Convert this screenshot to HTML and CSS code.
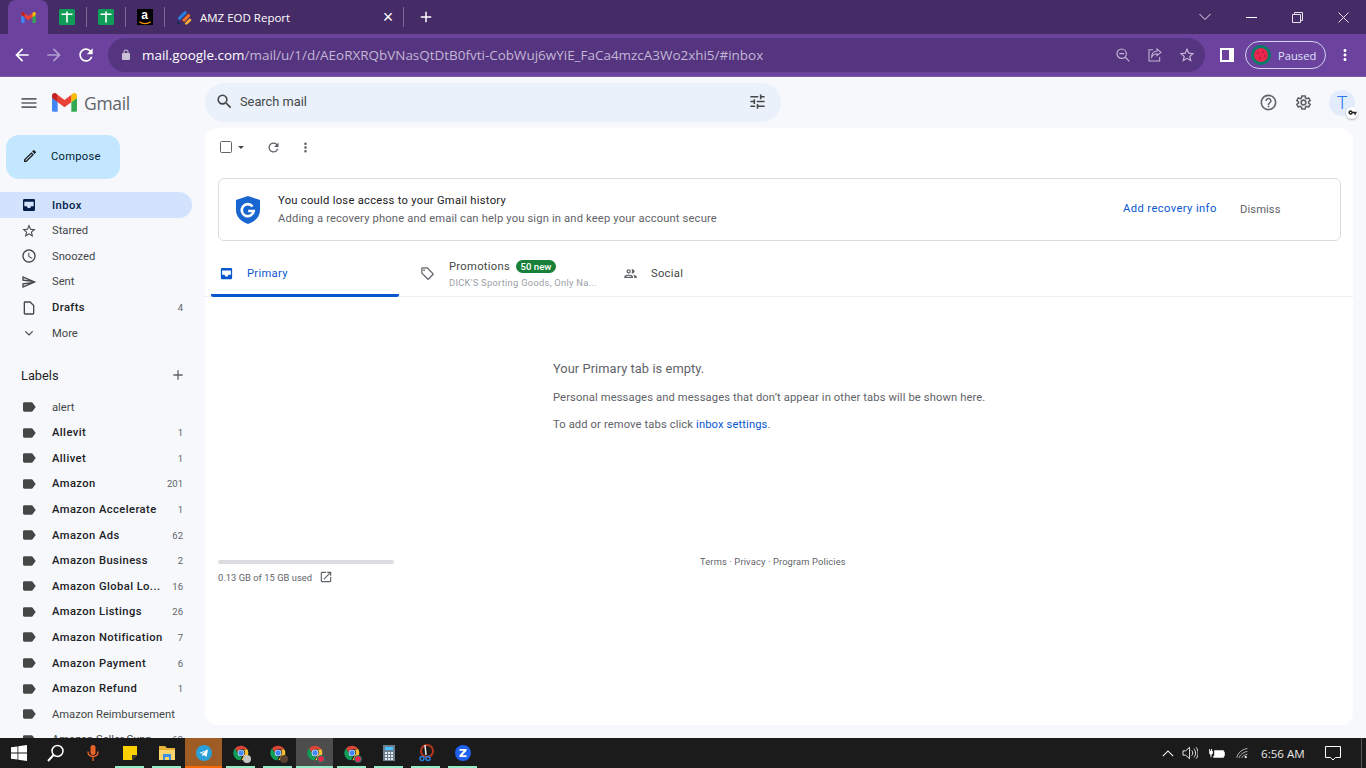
FILE: index.html
```html
<!DOCTYPE html>
<html lang="en">
<head>
<meta charset="utf-8">
<title>Gmail</title>
<link rel="stylesheet" href="styles.css">
</head>
<body>
<svg class="defs" aria-hidden="true">
  <symbol id="gmail" viewBox="0 0 256 193">
    <path fill="#4285F4" d="M58.182 192.05V93.14L27.507 65.077 0 49.504v125.091c0 9.658 7.825 17.455 17.455 17.455h40.727Z"/>
    <path fill="#34A853" d="M197.818 192.05h40.727c9.659 0 17.455-7.826 17.455-17.455V49.505l-31.156 17.837-27.026 25.798v98.91Z"/>
    <path fill="#EA4335" d="m58.182 93.14-4.174-38.647 4.174-36.989L128 69.868l69.818-52.364 4.669 34.992-4.669 40.644L128 145.504z"/>
    <path fill="#FBBC04" d="M197.818 17.504V93.14L256 49.504V26.231c0-21.585-24.64-33.89-41.89-20.945l-16.292 12.218Z"/>
    <path fill="#C5221F" d="m0 49.504 26.759 20.07L58.182 93.14V17.504L41.89 5.286C24.61-7.66 0 4.646 0 26.23v23.273Z"/>
  </symbol>
  <symbol id="sheet" viewBox="0 0 16 16">
    <rect width="16" height="16" rx="1.5" fill="#0f9d58"/>
    <path fill="#fff" d="M7.200 2.500h1.600v2h4.700v1.600H8.800v7.400H7.200V6.100H2.500V4.500h4.700z"/>
  </symbol>
  <symbol id="chrome" viewBox="0 0 24 24">
    <path fill="#db4437" d="M12 1a11 11 0 0 1 9.5 5.5H12a5.5 5.5 0 0 0-5.3 4L3 5A11 11 0 0 1 12 1z"/>
    <path fill="#fbc02d" d="M21.5 6.5A11 11 0 0 1 12.5 23l4.3-8A5.5 5.5 0 0 0 16 7z"/>
    <path fill="#0f9d58" d="M3 5l4 6.8A5.5 5.5 0 0 0 13.500 17.300L11 23A11 11 0 0 1 3 5z"/>
    <circle cx="12" cy="12" r="5" fill="#fff"/>
    <circle cx="12" cy="12" r="4" fill="#4285f4"/>
  </symbol>
  <symbol id="menu" viewBox="0 0 24 24"><path d="M3 18h18v-2H3v2zm0-5h18v-2H3v2zm0-7v2h18V6H3z"/></symbol>
  <symbol id="search" viewBox="0 0 24 24"><path d="M15.500 14h-.79l-.28-.27A6.470 6.470 0 0 0 16 9.500 6.500 6.500 0 1 0 9.500 16c1.610 0 3.090-.59 4.230-1.570l.27.28v.79l5 4.990L20.490 19l-4.990-5zm-6 0C7.010 14 5 11.990 5 9.500S7.010 5 9.500 5 14 7.010 14 9.500 11.990 14 9.500 14z"/></symbol>
  <symbol id="tune" viewBox="0 0 24 24"><path d="M3 17v2h6v-2H3zM3 5v2h10V5H3zm10 16v-2h8v-2h-8v-2h-2v6h2zM7 9v2H3v2h4v2h2V9H7zm14 4v-2H11v2h10zm-6-4h2V7h4V5h-4V3h-2v6z"/></symbol>
  <symbol id="help" viewBox="0 0 24 24"><path d="M11 18h2v-2h-2v2zm1-16C6.480 2 2 6.480 2 12s4.480 10 10 10 10-4.480 10-10S17.520 2 12 2zm0 18c-4.410 0-8-3.590-8-8s3.590-8 8-8 8 3.590 8 8-3.590 8-8 8zm0-14c-2.210 0-4 1.790-4 4h2c0-1.100.9-2 2-2s2 .9 2 2c0 2-3 1.750-3 5h2c0-2.250 3-2.500 3-5 0-2.210-1.790-4-4-4z"/></symbol>
  <symbol id="gear" viewBox="0 0 24 24"><path fill="none" stroke="currentColor" stroke-width="2" d="M18.400 12.900c.05-.3.100-.6.100-.9s-.05-.6-.1-.9l2-1.600-1.900-3.300-2.400 1c-.5-.4-1-.7-1.600-.9L14.100 3.700h-4.200l-.4 2.600c-.6.200-1.100.5-1.600.9l-2.400-1-1.900 3.300 2 1.600c-.05.3-.1.600-.1.900s.05.6.1.9l-2 1.600 1.900 3.300 2.400-1c.5.400 1 .7 1.600.9l.4 2.600h4.200l.4-2.600c.6-.2 1.100-.5 1.600-.9l2.400 1 1.900-3.300z"/><circle cx="12" cy="12" r="3" fill="none" stroke="currentColor" stroke-width="2"/></symbol>
  <symbol id="inbox" viewBox="0 0 24 24"><path fill-rule="evenodd" d="M19 3H5a2 2 0 0 0-2 2v14a2 2 0 0 0 2 2h14a2 2 0 0 0 2-2V5a2 2 0 0 0-2-2zM5 7h14v7h-4c0 1.660-1.350 3-3 3s-3-1.340-3-3H5z"/></symbol>
  <symbol id="star" viewBox="0 0 24 24"><path d="M22 9.240l-7.190-.62L12 2 9.190 8.630 2 9.240l5.460 4.730L5.820 21 12 17.270 18.180 21l-1.630-7.030L22 9.240zM12 15.400l-3.760 2.270 1-4.280-3.320-2.880 4.380-.38L12 6.100l1.710 4.040 4.380.38-3.320 2.880 1 4.280L12 15.400z"/></symbol>
  <symbol id="clock" viewBox="0 0 24 24"><path d="M11.990 2C6.470 2 2 6.480 2 12s4.470 10 9.990 10C17.520 22 22 17.520 22 12S17.520 2 11.990 2zM12 20c-4.420 0-8-3.580-8-8s3.580-8 8-8 8 3.580 8 8-3.580 8-8 8zm.5-13H11v6l5.250 3.150.75-1.230-4.500-2.670z"/></symbol>
  <symbol id="send" viewBox="0 0 24 24"><path d="M4.010 6.030l7.510 3.220-7.520-1 .01-2.220m7.500 8.720L4 17.970v-2.220l7.510-1M2.010 3L2 10l15 2-15 2 .01 7L23 12 2.010 3z"/></symbol>
  <symbol id="draft" viewBox="0 0 24 24"><path d="M14 2H6c-1.100 0-1.990.9-1.990 2L4 20c0 1.100.89 2 1.990 2H18c1.100 0 2-.9 2-2V8l-6-6zM6 20V4h7.200L18 8.800V20H6z"/></symbol>
  <symbol id="chev" viewBox="0 0 24 24"><path fill="none" stroke="currentColor" stroke-width="1.800" d="M6.500 9.500l5.500 5.500 5.500-5.500"/></symbol>
  <symbol id="label" viewBox="0 0 24 24"><path d="M17.630 5.840C17.270 5.330 16.670 5 16 5L5 5.010C3.900 5.010 3 5.900 3 7v10c0 1.100.9 1.990 2 1.990L16 19c.67 0 1.270-.33 1.630-.84L22 12l-4.370-6.160z"/></symbol>
  <symbol id="add" viewBox="0 0 24 24"><path d="M19 13h-6v6h-2v-6H5v-2h6V5h2v6h6v2z"/></symbol>
  <symbol id="pen" viewBox="0 0 24 24"><path d="M3 17.250V21h3.750L17.810 9.940l-3.750-3.750L3 17.250zM5.920 19H5v-.92l9.060-9.060.92.92L5.920 19zM20.710 7.040a1 1 0 0 0 0-1.410l-2.340-2.340a1 1 0 0 0-1.410 0l-1.830 1.830 3.750 3.750 1.830-1.830z"/></symbol>
  <symbol id="refresh" viewBox="0 0 24 24"><path d="M17.650 6.350A7.958 7.958 0 0 0 12 4c-4.420 0-7.990 3.580-7.990 8s3.570 8 7.990 8c3.730 0 6.840-2.550 7.730-6h-2.080A5.990 5.990 0 0 1 12 18c-3.310 0-6-2.690-6-6s2.690-6 6-6c1.660 0 3.140.69 4.220 1.780L13 11h7V4l-2.350 2.350z"/></symbol>
  <symbol id="dots" viewBox="0 0 24 24"><path d="M12 8c1.100 0 2-.9 2-2s-.9-2-2-2-2 .9-2 2 .9 2 2 2zm0 2c-1.100 0-2 .9-2 2s.9 2 2 2 2-.9 2-2-.9-2-2-2zm0 6c-1.100 0-2 .9-2 2s.9 2 2 2 2-.9 2-2-.9-2-2-2z"/></symbol>
  <symbol id="tag" viewBox="0 0 24 24"><path d="M21.410 11.580l-9-9C12.050 2.220 11.550 2 11 2H4c-1.100 0-2 .9-2 2v7c0 .55.22 1.050.59 1.420l9 9c.36.36.86.58 1.410.58s1.050-.22 1.410-.59l7-7c.37-.36.59-.86.59-1.410s-.23-1.060-.59-1.420zM13 20.010L4 11V4h7v-.01l9 9-7 7.020z"/><circle cx="6.500" cy="6.500" r="1.500"/></symbol>
  <symbol id="people" viewBox="0 0 24 24"><path d="M9 13.750c-2.340 0-7 1.170-7 3.500V19h14v-1.750c0-2.330-4.660-3.500-7-3.500zM4.340 17c.84-.58 2.870-1.250 4.660-1.250s3.820.67 4.660 1.250H4.340zM9 12c1.930 0 3.500-1.570 3.500-3.500S10.930 5 9 5 5.500 6.570 5.500 8.500 7.070 12 9 12zm0-5c.83 0 1.500.67 1.500 1.500S9.830 10 9 10s-1.500-.67-1.500-1.500S8.170 7 9 7zm7.040 6.810c1.160.84 1.960 1.960 1.960 3.440V19h4v-1.750c0-2.020-3.500-3.170-5.960-3.440zM15 12c1.930 0 3.500-1.570 3.500-3.500S16.930 5 15 5c-.54 0-1.040.13-1.500.35.63.89 1 1.980 1 3.150s-.37 2.260-1 3.150c.46.22.96.35 1.500.35z"/></symbol>
  <symbol id="open" viewBox="0 0 24 24"><path d="M19 19H5V5h7V3H5a2 2 0 0 0-2 2v14a2 2 0 0 0 2 2h14c1.100 0 2-.9 2-2v-7h-2v7zM14 3v2h3.590l-9.830 9.830 1.410 1.410L19 6.410V10h2V3h-7z"/></symbol>
  <symbol id="back" viewBox="0 0 24 24"><path d="M20 11H7.830l5.590-5.590L12 4l-8 8 8 8 1.410-1.410L7.830 13H20v-2z"/></symbol>
  <symbol id="forward" viewBox="0 0 24 24"><path d="M4 11h12.170l-5.590-5.590L12 4l8 8-8 8-1.410-1.410L16.170 13H4v-2z"/></symbol>
  <symbol id="lock" viewBox="0 0 24 24"><path d="M18 8h-1V6a5 5 0 0 0-10 0v2H6a2 2 0 0 0-2 2v10a2 2 0 0 0 2 2h12a2 2 0 0 0 2-2V10a2 2 0 0 0-2-2zM9 8V6a3 3 0 0 1 6 0v2H9z"/></symbol>
  <symbol id="zoomout" viewBox="0 0 24 24"><circle cx="10" cy="10" r="7" fill="none" stroke="currentColor" stroke-width="1.800"/><path fill="none" stroke="currentColor" stroke-width="1.800" d="M15 15l6.500 6.500M6.500 10h7"/></symbol>
  <symbol id="share" viewBox="0 0 24 24"><path fill="none" stroke="currentColor" stroke-width="1.600" d="M9 4H3v17h16v-6M21 8l-6-5v3c-5 .5-8 4-8 9 2-3.500 4.500-5 8-5v3z"/></symbol>
  <symbol id="staro" viewBox="0 0 24 24"><path fill="none" stroke="currentColor" stroke-width="1.800" d="M12 3.500l2.600 5.800 6.400.6-4.800 4.200 1.400 6.200-5.600-3.300-5.600 3.300 1.400-6.200L3 9.900l6.400-.6z"/></symbol>
  <symbol id="key" viewBox="0 0 24 24"><path d="M12.650 10A6 6 0 0 0 1 12a6 6 0 0 0 11.650 2H17v4h4v-4h2v-4H12.650zM7 14a2 2 0 1 1 0-4 2 2 0 0 1 0 4z"/></symbol>
</svg>

<div class="app">
  <header class="tabstrip">
    <div class="tab-active"><svg class="fav-gmail"><use href="#gmail"/></svg></div>
    <div class="tab-pin"><svg class="fav"><use href="#sheet"/></svg></div>
    <div class="tab-pin"><svg class="fav"><use href="#sheet"/></svg></div>
    <div class="tab-pin"><div class="fav-amazon"><span class="amazon-a">a</span><svg class="amazon-smile" viewBox="0 0 16 5"><path fill="none" stroke="#f90" stroke-width="1.500" d="M1 1c4 3 10 3 14 0"/></svg></div></div>
    <div class="tab-page">
      <svg class="fav" viewBox="0 0 16 16"><path fill="#2a7de1" d="M1.500 9L8 2.500a1.600 1.600 0 0 1 2.300 2.300L3.800 11.300z"/><path fill="#f37021" d="M6 11l5.500-5.500a1.500 1.500 0 0 1 2.200 2.200L8.200 13.200z"/><path fill="#fbb034" d="M9 14l4-4a1.300 1.300 0 0 1 1.900 1.900l-3.800 3.600H9z"/><path fill="#1a2a5e" d="M1 15v-4l4 4z"/></svg>
      <span class="tab-title">AMZ EOD Report</span>
      <span class="tab-close">×</span>
    </div>
    <svg class="newtab"><use href="#add"/></svg>
    <div class="spacer"></div>
    <div class="winbtn"><svg class="win-chev" viewBox="0 0 12 8"><path fill="none" stroke="currentColor" d="M.5 1l5.500 5.500L11.500 1"/></svg></div>
    <div class="winbtn"><div class="win-min"></div></div>
    <div class="winbtn"><svg class="win-ico" viewBox="0 0 11 11"><path fill="none" stroke="currentColor" d="M.5 2.500h8v8h-8zM2.500 2.500v-2h8v8h-2"/></svg></div>
    <div class="winbtn"><svg class="win-ico" viewBox="0 0 11 11"><path fill="none" stroke="currentColor" d="M.5.5l10 10M10.500.5l-10 10"/></svg></div>
  </header>

  <nav class="toolbar">
    <div class="navbtn"><svg class="ico20 c-white"><use href="#back"/></svg></div>
    <div class="navbtn"><svg class="ico20 c-dim"><use href="#forward"/></svg></div>
    <div class="navbtn"><svg class="ico20 c-white"><use href="#refresh"/></svg></div>
    <div class="omnibox">
      <svg class="lock"><use href="#lock"/></svg>
      <span class="url"><span class="url-host">mail.google.com</span>/mail/u/1/d/AEoRXRQbVNasQtDtB0fvti-CobWuj6wYiE_FaCa4mzcA3Wo2xhi5/#inbox</span>
      <div class="omni-btn"><svg class="ico16"><use href="#zoomout"/></svg></div>
      <div class="omni-btn"><svg class="ico16"><use href="#share"/></svg></div>
      <div class="omni-btn"><svg class="ico16"><use href="#staro"/></svg></div>
    </div>
    <div class="sidepanel"></div>
    <div class="profile">
      <svg class="melon" viewBox="0 0 20 20"><circle cx="10" cy="10" r="10" fill="#067d68"/><circle cx="10" cy="10" r="7" fill="#e9264d"/><circle cx="7" cy="8" r=".7" fill="#7a1028"/><circle cx="12" cy="7" r=".7" fill="#7a1028"/><circle cx="14" cy="11" r=".7" fill="#7a1028"/><circle cx="9" cy="13" r=".7" fill="#7a1028"/></svg>
      <span class="paused">Paused</span>
    </div>
    <svg class="chrome-dots"><use href="#dots"/></svg>
  </nav>

  <div class="gmail">
    <div class="brand">
      <svg class="ico20 hamburger"><use href="#menu"/></svg>
      <svg class="gmail-logo"><use href="#gmail"/></svg>
      <span class="gmail-word">Gmail</span>
    </div>
    <div class="topbar">
      <div class="searchbox">
        <svg class="ico19 c-dark"><use href="#search"/></svg>
        <span class="search-text">Search mail</span>
        <svg class="ico19 c-dark tune"><use href="#tune"/></svg>
      </div>
      <div class="spacer"></div>
      <svg class="ico19 c-grey help"><use href="#help"/></svg>
      <svg class="ico19 c-grey gear"><use href="#gear"/></svg>
      <div class="avatar">T<span class="keybadge"><svg class="keyico"><use href="#key"/></svg></span></div>
    </div>

    <aside class="sidebar">
      <div class="compose"><svg class="ico16 c-black"><use href="#pen"/></svg><span>Compose</span></div>
      <ul class="nav main-nav">
        <li class="row active"><svg class="rowico"><use href="#inbox"/></svg><span class="name">Inbox</span></li>
        <li class="row"><svg class="rowico"><use href="#star"/></svg><span class="name">Starred</span></li>
        <li class="row"><svg class="rowico"><use href="#clock"/></svg><span class="name">Snoozed</span></li>
        <li class="row"><svg class="rowico"><use href="#send"/></svg><span class="name">Sent</span></li>
        <li class="row unread"><svg class="rowico"><use href="#draft"/></svg><span class="name">Drafts</span><span class="count">4</span></li>
        <li class="row"><svg class="rowico"><use href="#chev"/></svg><span class="name">More</span></li>
      </ul>
      <div class="labels-head"><span>Labels</span><svg class="ico16 c-grey"><use href="#add"/></svg></div>
      <ul class="nav labels">
        <li class="row"><svg class="rowico"><use href="#label"/></svg><span class="name">alert</span></li>
        <li class="row unread"><svg class="rowico"><use href="#label"/></svg><span class="name">Allevit</span><span class="count">1</span></li>
        <li class="row unread"><svg class="rowico"><use href="#label"/></svg><span class="name">Allivet</span><span class="count">1</span></li>
        <li class="row unread"><svg class="rowico"><use href="#label"/></svg><span class="name">Amazon</span><span class="count">201</span></li>
        <li class="row unread"><svg class="rowico"><use href="#label"/></svg><span class="name">Amazon Accelerate</span><span class="count">1</span></li>
        <li class="row unread"><svg class="rowico"><use href="#label"/></svg><span class="name">Amazon Ads</span><span class="count">62</span></li>
        <li class="row unread"><svg class="rowico"><use href="#label"/></svg><span class="name">Amazon Business</span><span class="count">2</span></li>
        <li class="row unread"><svg class="rowico"><use href="#label"/></svg><span class="name">Amazon Global Lo...</span><span class="count">16</span></li>
        <li class="row unread"><svg class="rowico"><use href="#label"/></svg><span class="name">Amazon Listings</span><span class="count">26</span></li>
        <li class="row unread"><svg class="rowico"><use href="#label"/></svg><span class="name">Amazon Notification</span><span class="count">7</span></li>
        <li class="row unread"><svg class="rowico"><use href="#label"/></svg><span class="name">Amazon Payment</span><span class="count">6</span></li>
        <li class="row unread"><svg class="rowico"><use href="#label"/></svg><span class="name">Amazon Refund</span><span class="count">1</span></li>
        <li class="row"><svg class="rowico"><use href="#label"/></svg><span class="name">Amazon Reimbursement</span></li>
        <li class="row"><svg class="rowico"><use href="#label"/></svg><span class="name">Amazon Seller Supp</span><span class="count">63</span></li>
      </ul>
    </aside>

    <main class="panel">
      <div class="actions">
        <div class="checkbox"></div>
        <div class="caret"></div>
        <svg class="ico15 c-grey refresh"><use href="#refresh"/></svg>
        <svg class="ico15 c-grey more"><use href="#dots"/></svg>
      </div>
      <section class="banner">
        <svg class="shield" viewBox="0 0 24 28"><path fill="#1a66d0" d="M12 0l12 4v10c0 7-5 11.500-12 14C5 25.500 0 21 0 14V4z"/><path fill="none" stroke="#fff" stroke-width="2.600" d="M16.500 10.500a6 6 0 1 0 1.200 4.500h-5.500"/></svg>
        <div class="banner-text">
          <div class="banner-title">You could lose access to your Gmail history</div>
          <div class="banner-sub">Adding a recovery phone and email can help you sign in and keep your account secure</div>
        </div>
        <a class="banner-link">Add recovery info</a>
        <span class="banner-dismiss">Dismiss</span>
      </section>
      <div class="tabs">
        <div class="mailtab primary"><svg class="ico15"><use href="#inbox"/></svg><span>Primary</span></div>
        <div class="mailtab promo">
          <svg class="ico15 c-grey"><use href="#tag"/></svg>
          <div class="promo-text">
            <div class="promo-top"><span>Promotions</span><span class="newbadge">50 new</span></div>
            <div class="promo-sub">DICK'S Sporting Goods, Only Na...</div>
          </div>
        </div>
        <div class="mailtab social"><svg class="ico15 c-grey"><use href="#people"/></svg><span>Social</span></div>
      </div>
      <div class="empty">
        <div class="empty-title">Your Primary tab is empty.</div>
        <div class="empty-line">Personal messages and messages that don’t appear in other tabs will be shown here.</div>
        <div class="empty-line gap">To add or remove tabs click <a class="link">inbox settings</a>.</div>
      </div>
      <footer class="foot">
        <div class="storage">
          <div class="bar"></div>
          <div class="used"><span>0.13 GB of 15 GB used</span><svg class="ico14"><use href="#open"/></svg></div>
        </div>
        <div class="terms">Terms · Privacy · Program Policies</div>
      </footer>
    </main>
  </div>

  <footer class="taskbar">
    <div class="tb"><svg class="ico16" viewBox="0 0 16 16"><path fill="#fff" d="M0 2.300l6.500-.9v6.200H0zM7.300 1.300L16 0v7.600H7.300zM0 8.400h6.500v6.200L0 13.700zM7.300 8.400H16V16l-8.700-1.200z"/></svg></div>
    <div class="tb"><svg class="ico18" viewBox="0 0 18 18"><circle cx="10.500" cy="7" r="5.500" fill="none" stroke="#fff" stroke-width="1.500"/><path stroke="#fff" stroke-width="2" d="M6.500 11L1 17"/></svg></div>
    <div class="tb"><svg class="ico18" viewBox="0 0 18 18"><rect x="6.500" y="1" width="5" height="10" rx="2.500" fill="#e8632a"/><path fill="none" stroke="#e8632a" stroke-width="1.400" d="M4 7.500c0 3 2 5 5 5s5-2 5-5M9 12.500V17"/></svg></div>
    <div class="tb on"><svg class="ico16" viewBox="0 0 16 16"><path fill="#fbd000" d="M1 1h14v9l-5 5H1z"/><path fill="#333" d="M15 10l-5 5v-5z"/></svg></div>
    <div class="tb on"><svg class="ico18" viewBox="0 0 18 18"><path fill="#e8b23a" d="M1 2h6l2 2h8v12H1z"/><path fill="#fbd56b" d="M1 6h16v10H1z"/><path fill="#3a8ee6" d="M5 10h8v6h-2v-3H7v3H5z"/></svg></div>
    <div class="tb on tele"><svg class="ico16" viewBox="0 0 20 20"><circle cx="10" cy="10" r="10" fill="#2b9fd8"/><path fill="#fff" d="M4 10l11-4.500-1.800 9.500-3.400-2.500-1.800 1.700-.2-3 4.800-4.200-6 3.600z"/></svg></div>
    <div class="tb on"><div class="chromewrap"><svg class="ico16"><use href="#chrome"/></svg><span class="cbadge grey"></span></div></div>
    <div class="tb on"><div class="chromewrap"><svg class="ico16"><use href="#chrome"/></svg><span class="cbadge brown"></span></div></div>
    <div class="tb on current"><div class="chromewrap"><svg class="ico16"><use href="#chrome"/></svg><span class="cbadge pink"></span></div></div>
    <div class="tb on"><div class="chromewrap"><svg class="ico16"><use href="#chrome"/></svg><span class="cbadge pink"></span></div></div>
    <div class="tb on"><svg class="ico18" viewBox="0 0 18 18"><rect x="3" y="1" width="12" height="16" fill="#6d7f8f"/><rect x="5" y="3" width="8" height="3" fill="#4cc2ff"/><path fill="#e6edf2" d="M5 8h2v2H5zM8 8h2v2H8zM11 8h2v2h-2zM5 11h2v2H5zM8 11h2v2H8zM11 11h2v2h-2zM5 14h2v2H5zM8 14h2v2H8zM11 14h2v2h-2z"/></svg></div>
    <div class="tb on"><svg class="ico18" viewBox="0 0 18 18"><circle cx="10" cy="7" r="6" fill="none" stroke="#b5361c" stroke-width="2"/><path stroke="#eee" stroke-width="1.500" d="M8 1l1 10"/><circle cx="5" cy="14.500" r="2" fill="none" stroke="#2a7de1" stroke-width="1.500"/><circle cx="11" cy="14.500" r="2" fill="none" stroke="#2a7de1" stroke-width="1.500"/></svg></div>
    <div class="tb on"><svg class="ico16" viewBox="0 0 18 18"><circle cx="9" cy="9" r="9" fill="#1f62f0"/><path fill="#fff" d="M5 4.500h8v2L8.300 11.500H13v2H5v-2l4.700-5H5z"/></svg></div>
    <div class="spacer"></div>
    <div class="tray">
      <svg class="tray-ico chev-up" viewBox="0 0 14 8"><path fill="none" stroke="#fff" stroke-width="1.200" d="M1 7l6-6 6 6"/></svg>
      <svg class="tray-ico speaker" viewBox="0 0 18 16"><path fill="none" stroke="#fff" d="M1 5.500h3L8.500 1.500v13L4 10.500H1zM11 5c1.500 1.500 1.500 4.500 0 6M13.500 3c2.500 3 2.500 7 0 10M16 1.500c3 4 3 9 0 13"/></svg>
      <svg class="tray-ico battery" viewBox="0 0 18 12"><path fill="#fff" d="M1 1h1v2h1V1h1v2h1v3L3.500 7.500V10h-1V7.500L1 6zM6.500 2.500H17V4h1v5h-1v1.500H5.500V8.500h1z"/></svg>
      <svg class="tray-ico wifi" viewBox="0 0 16 14"><path fill="none" stroke="#d8d8d8" d="M1 13C2 7 7 2.500 14 1.500M4 13c.8-4 4-6.500 10-8M7 13c.6-2 3-3.500 7-4.500"/><circle cx="12" cy="12" r="1.400" fill="#fff"/></svg>
      <span class="clock">6:56 AM</span>
      <svg class="tray-ico notif" viewBox="0 0 16 15"><path fill="none" stroke="#fff" d="M.5.500h15v11h-5l-2.500 2.500-2.500-2.500h-5z"/></svg>
      <div class="showdesk"></div>
    </div>
  </footer>
</div>
</body>
</html>
```
FILE: styles.css
```css
* { box-sizing: border-box; }
html, body { margin: 0; padding: 0; height: 100%; overflow: hidden; }
body { font-family: Roboto, "Liberation Sans", sans-serif; font-size: 11.2px; color: #202124; }
ul { list-style: none; margin: 0; padding: 0; }
svg { display: block; flex: none; fill: currentColor; }
.defs { width: 0; height: 0; position: absolute; }
.spacer { flex: 1; }

.app { width: 1366px; height: 768px; display: flex; flex-direction: column; overflow: hidden; }

.ico14 { width: 14px; height: 14px; }
.ico15 { width: 15px; height: 15px; }
.ico16 { width: 16px; height: 16px; }
.ico18 { width: 18px; height: 18px; }
.ico19 { width: 19px; height: 19px; }
.ico20 { width: 20px; height: 20px; }
.c-white { color: #fff; }
.c-dim { color: #b39dcf; }
.c-dark { color: #444746; }
.c-grey { color: #5f6368; }
.c-black { color: #1f1f1f; }

/* Chrome tab strip */
.tabstrip { height: 34px; flex: none; background: #452c66; display: flex; align-items: center; padding-left: 8px; color: #fff; }
.tab-active { width: 40px; height: 34px; background: #6b429d; border-radius: 8px 8px 0 0; display: flex; align-items: center; justify-content: center; }
.fav-gmail { width: 15px; height: 11px; }
.fav { width: 16px; height: 16px; }
.tab-pin { width: 39px; height: 20px; display: flex; align-items: center; justify-content: center; border-right: 1px solid #7d6a99; padding-right: 1px; }
.fav-amazon { width: 16px; height: 16px; background: #000; display: flex; flex-direction: column; align-items: center; }
.amazon-a { font: 700 12px/12px "Liberation Sans", sans-serif; color: #fff; }
.amazon-smile { width: 14px; height: 4px; }
.tab-page { width: 239px; height: 20px; display: flex; align-items: center; padding-left: 11px; border-right: 1px solid #7d6a99; }
.tab-title { font: 11.500px "Open Sans", sans-serif; margin-left: 8px; flex: 1; white-space: nowrap; }
.tab-close { font: 18px/20px "Liberation Sans", sans-serif; width: 30px; text-align: center; }
.newtab { width: 18px; height: 18px; margin-left: 13px; color: #fff; }
.winbtn { width: 46px; height: 30px; display: flex; align-items: center; justify-content: center; color: #e8e3ef; }
.win-chev { width: 12px; height: 8px; }
.win-min { width: 11px; height: 1px; background: #fff; }
.win-ico { width: 11px; height: 11px; }

/* Chrome toolbar */
.toolbar { height: 43px; flex: none; background: #6b429d; border-bottom: 1px solid #7d58ab; display: flex; align-items: center; padding-left: 6px; color: #fff; }
.navbtn { width: 32px; display: flex; justify-content: center; }
.omnibox { width: 1097px; height: 34px; margin-left: 6px; border-radius: 17px; background: #55357f; display: flex; align-items: center; padding: 0 2px 0 12px; }
.lock { width: 12px; height: 12px; color: #c9c0d6; }
.url { flex: 1; margin-left: 10px; font: 13.460px "Open Sans", sans-serif; color: #c3b6d6; white-space: nowrap; overflow: hidden; }
.url-host { color: #fff; }
.omni-btn { width: 32px; display: flex; justify-content: center; color: #c3b6d6; }
.sidepanel { width: 14px; height: 14px; margin-left: 15px; border: 2px solid #fff; border-right-width: 5px; background: #6b429d; }
.profile { width: 81px; height: 28px; margin-left: 11px; border: 1px solid #d3d3f2; border-radius: 14px; display: flex; align-items: center; padding-left: 5px; }
.melon { width: 20px; height: 20px; }
.paused { font: 11.200px "Open Sans", sans-serif; color: #dfe3fb; margin-left: 7px; }
.chrome-dots { width: 18px; height: 18px; margin-left: 10px; }

/* Gmail */
.gmail { flex: 1; min-height: 0; background: #f6f8fc; display: grid; grid-template-columns: 205px 1fr; grid-template-rows: 51px 1fr; }
.brand { display: flex; align-items: center; padding-left: 19px; }
.hamburger { color: #5f6368; }
.gmail-logo { width: 25px; height: 19px; margin-left: 13px; }
.gmail-word { font: 17.500px "Open Sans", Roboto, sans-serif; color: #5f6368; margin-left: 7px; letter-spacing: -.3px; }

.topbar { display: flex; align-items: center; padding-right: 11px; }
.searchbox { width: 576px; height: 39px; margin-top: -1px; border-radius: 20px; background: #eaf1fb; display: flex; align-items: center; padding: 0 14px 2px 10px; }
.search-text { flex: 1; margin-left: 6px; font-size: 12.800px; color: #444746; }
.gear { margin-left: 16px; }
.avatar { position: relative; width: 26px; height: 26px; margin-left: 16px; border-radius: 50%; background: #e3ecfb; color: #2a76f0; font-size: 18px; font-weight: 300; line-height: 26px; text-align: center; }
.keybadge { position: absolute; right: -3px; bottom: -3px; width: 12px; height: 12px; border-radius: 50%; background: #fff; box-shadow: 0 1px 2px rgba(0,0,0,.3); display: flex; align-items: center; justify-content: center; }
.keyico { width: 9px; height: 9px; color: #202124; }

.sidebar { overflow: hidden; min-height: 0; }
.compose { margin: 7px 0 0 6px; width: 114px; height: 44px; padding-bottom: 2px; background: #c2e7ff; border-radius: 13px; display: flex; align-items: center; padding-left: 16px; color: #001d35; gap: 13px; letter-spacing: .25px; }
.main-nav { margin-top: 13.400px; }
.row { height: 25.600px; width: 192px; display: flex; align-items: center; padding: 0 9px 0 21px; border-radius: 0 13px 13px 0; color: #444746; }
.rowico { width: 16px; height: 16px; color: #444746; }
.name { margin-left: 15px; flex: 1; white-space: nowrap; }
.count { font-size: 9.500px; color: #5f6368; }
.unread .name { font-weight: 500; color: #202124; letter-spacing: .42px; }
.active { background: #d3e3fd; }
.active .name { font-weight: 500; color: #041e49; letter-spacing: .45px; }
.active .rowico { color: #041e49; }
.labels-head { margin-top: 16.400px; height: 26px; width: 192px; display: flex; align-items: center; justify-content: space-between; padding: 0 6px 0 21px; font-size: 12.800px; color: #1f1f1f; }
.labels { margin-top: 6px; }

.panel { background: #fff; border-radius: 13px; margin: 0 13px 13px 0; min-height: 0; overflow: hidden; }
.actions { height: 38px; display: flex; align-items: center; padding-left: 15px; }
.checkbox { width: 12px; height: 12px; border: 1.500px solid #5f6368; border-radius: 1.500px; }
.caret { margin-left: 6px; border: 3px solid transparent; border-top: 3px solid #444746; border-bottom: 0; }
.refresh { margin-left: 22px; }
.more { margin-left: 17px; }

.banner { margin: 12px 12px 0 13px; height: 63px; border: 1px solid #dadce0; border-radius: 6px; display: flex; align-items: center; padding-left: 17px; }
.shield { width: 24px; height: 28px; }
.banner-text { margin-left: 18px; flex: none; width: 845px; }
.banner-title { line-height: 18px; color: #202124; letter-spacing: .28px; }
.banner-sub { line-height: 18px; color: #5f6368; letter-spacing: .155px; }
.banner-link { color: #0b57d0; width: 117px; letter-spacing: .4px; padding-bottom: 2px; }
.banner-dismiss { color: #5f6368; padding-bottom: 1px; letter-spacing: .1px; }

.tabs { margin-top: 9px; height: 47px; border-bottom: 1px solid #eceff1; display: flex; padding-left: 6px; }
.mailtab { display: flex; align-items: center; color: #444746; height: 47px; letter-spacing: .3px; }
.primary { width: 188px; padding-left: 8px; gap: 13px; color: #0b57d0; border-bottom: 3px solid #0b57d0; border-radius: 0 0 2px 2px; padding-top: 2px; }
.promo { width: 208px; padding-left: 21px; gap: 14px; }
.promo-text { padding-top: 2px; }
.promo-top { display: flex; align-items: center; gap: 6px; line-height: 14px; }
.newbadge { background: #188038; color: #fff; font-size: 9.600px; font-weight: 500; line-height: 13px; height: 13px; width: 40px; text-align: center; border-radius: 7px; letter-spacing: 0; }
.promo-sub { font-size: 9.300px; line-height: 14px; margin-top: 2px; color: #9aa0a6; white-space: nowrap; }
.social { padding-left: 16px; gap: 13px; }

.empty { margin: 62px 0 0 348px; color: #5f6368; }
.empty-title { font-size: 12.800px; line-height: 20px; letter-spacing: .08px; }
.empty-line { line-height: 20px; margin-top: 9px; letter-spacing: .12px; }
.gap { margin-top: 7px; }
.link { color: #0b57d0; }

.foot { display: flex; margin-top: 125px; padding-left: 13px; font-size: 9.300px; color: #5f6368; }
.storage { width: 176px; }
.bar { height: 4px; border-radius: 2px; background: #dadce0; }
.used { display: flex; align-items: center; gap: 7px; margin-top: 6px; letter-spacing: .05px; }
.terms { margin-left: 306px; line-height: 4px; letter-spacing: .15px; }

/* Windows taskbar */
.taskbar { height: 30px; flex: none; background: #1b1b1b; display: flex; align-items: center; color: #fff; }
.tb { width: 37px; height: 30px; position: relative; display: flex; align-items: center; justify-content: center; }
.tb.on::after { content: ""; position: absolute; left: 4px; right: 4px; bottom: 0; height: 2px; background: #96ecc6; }
.tb.current { background: #4d4d4d; }
.tb.current::after { left: 0; right: 0; }
.tb.tele { background: #a05c25; }
.tb.tele::after { left: 0; right: 0; background: #f76a00; }
.chromewrap { position: relative; }
.cbadge { position: absolute; right: -2px; bottom: -2px; width: 8px; height: 8px; border-radius: 50%; }
.grey { background: #c5c5c5; }
.brown { background: #5a4230; }
.pink { background: #e9264d; border: 1.500px solid #067d68; }

.tray { display: flex; align-items: center; height: 30px; }
.tray-ico { color: #fff; }
.chev-up { width: 12px; height: 7px; }
.speaker { width: 16px; height: 14px; margin-left: 8px; }
.battery { width: 17px; height: 11px; margin-left: 10px; }
.wifi { width: 13px; height: 12px; margin-left: 11px; }
.clock { font: 11.600px "Open Sans", sans-serif; color: #e8e8e8; margin-left: 12px; width: 46px; white-space: nowrap; }
.notif { width: 16px; height: 15px; margin-left: 18px; }
.showdesk { width: 1px; height: 30px; background: #555; margin: 0 4px 0 20px; }
```
